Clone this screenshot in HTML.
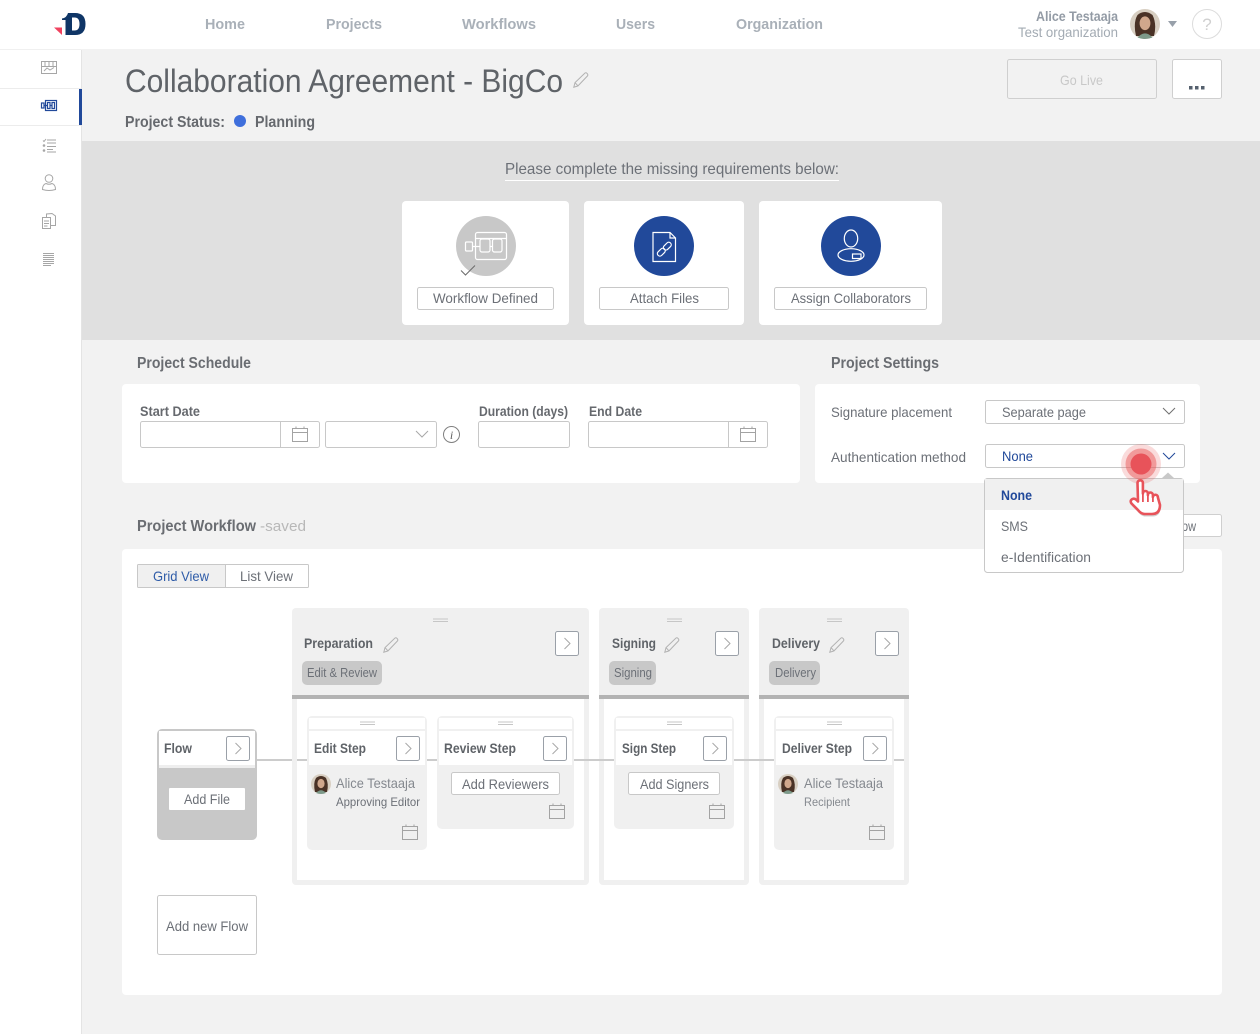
<!DOCTYPE html>
<html lang="en">
<head>
<meta charset="utf-8">
<title>Collaboration Agreement - BigCo</title>
<style>
html,body{margin:0;padding:0;background:#f2f2f2;}
body{width:1260px;height:1034px;overflow:hidden;}
svg{display:block;}
text{font-family:"Liberation Sans",sans-serif;font-size:14px;fill:#6c7077;}
.b{font-weight:bold;}
.nav{font-size:15px;font-weight:bold;fill:#a9b0b8;}
.st{font-size:14px;font-weight:bold;fill:#5f6368;}
.h{font-size:16px;font-weight:bold;fill:#6a6d72;}
.lab{font-size:14px;font-weight:bold;fill:#66696e;}
.ln{fill:none;stroke:#a6a6a6;stroke-width:1;}
.box{fill:#fff;stroke:#c8c8c8;stroke-width:1;}
.wh{fill:none;stroke:#fff;stroke-width:1.2;}
</style>
</head>
<body>
<svg width="1260" height="1034" viewBox="0 0 1260 1034" xmlns="http://www.w3.org/2000/svg">
<defs>
  <g id="cal"><rect x="0.5" y="2.5" width="15" height="13" fill="none" stroke="#a3a3a3"/><path d="M0.5 6.5H15.5M4 0.5V2.5M12 0.5V2.5" fill="none" stroke="#a3a3a3"/></g>
  <g id="nx"><rect x="0.5" y="0.5" width="23" height="24" rx="2" fill="#fff" stroke="#9aa0a8"/><path d="M9.5 7L15 12.5L9.5 18" fill="none" stroke="#a8a8a8"/></g>
  <g id="pen"><path d="M0.8 15.2L2 10.6L12 1Q13 .4 13.9 1.3L14.6 2.1Q15.2 3.1 14.4 4L5 13.9Z M2 10.600L5 13.900" fill="none" stroke="#b2b2b2"/></g>
  <g id="drag"><path d="M0 0H15M0 2.5H15" stroke="#c6c6c6" fill="none"/></g>
  <g id="av"><circle r="10" fill="#d8cfc2"/><path d="M-6 8Q-8-1-5-6Q0-10 5-6Q8 0 6 8Z" fill="#4a3226"/><ellipse cx="0" cy="-0.5" rx="3.6" ry="4.6" fill="#d0a78c"/><path d="M-5 9Q0 3.500 5 9Q0 11-5 9Z" fill="#7d9a8a"/></g>
</defs>

<!-- backgrounds -->
<rect width="1260" height="1034" fill="#f2f2f2"/>
<rect width="1260" height="49" fill="#fff"/>
<rect x="82" y="141" width="1178" height="199" fill="#e0e0e0"/>
<rect x="0" y="50" width="81" height="984" fill="#fff"/>
<rect x="81" y="50" width="1" height="984" fill="#e4e4e4"/>
<rect x="0" y="49" width="81" height="1" fill="#f0f0f0"/>
<rect x="0" y="88" width="81" height="1" fill="#ececec"/>
<rect x="0" y="125" width="81" height="1" fill="#ececec"/>
<rect x="79" y="89" width="3" height="36" fill="#21499a"/>

<!-- logo -->
<path d="M54 27.5H62V35Z" fill="#f0425f"/>
<path d="M62 18.500Q66.500 18 68 13H72V35H65.500V20H62Z" fill="#0f3566"/>
<path d="M72 13H75Q85.500 13 85.500 24Q85.500 35 75 35H65.500V30.500H74.500Q79.500 30.500 79.500 24Q79.500 17.500 74.500 17.500H72Z" fill="#0f3566"/>

<!-- nav -->
<text class="nav" x="205" y="29" textLength="40" lengthAdjust="spacingAndGlyphs">Home</text>
<text class="nav" x="326" y="29" textLength="56" lengthAdjust="spacingAndGlyphs">Projects</text>
<text class="nav" x="462" y="29" textLength="74" lengthAdjust="spacingAndGlyphs">Workflows</text>
<text class="nav" x="616" y="29" textLength="39" lengthAdjust="spacingAndGlyphs">Users</text>
<text class="nav" x="736" y="29" textLength="87" lengthAdjust="spacingAndGlyphs">Organization</text>
<text x="1036" y="21" textLength="82" lengthAdjust="spacingAndGlyphs" style="font-size:13.500px;font-weight:bold;fill:#939ba5">Alice Testaaja</text>
<text x="1018" y="37" textLength="100" lengthAdjust="spacingAndGlyphs" style="font-size:14px;fill:#a3abb3">Test organization</text>
<g transform="translate(1145,24) scale(1.500)"><use href="#av"/></g>
<path d="M1168 21H1177L1172.500 27Z" fill="#98a0aa"/>
<circle cx="1207" cy="24" r="14.500" fill="#fff" stroke="#dcdcdc"/>
<text x="1207" y="30" text-anchor="middle" style="font-size:17px;fill:#d0d0d0">?</text>

<!-- sidebar icons -->
<g class="ln" fill="none">
  <rect x="41.500" y="61.500" width="15" height="12"/>
  <path d="M41.500 66.500H56.500M45 61.500V66.500M49 61.500V66.500M53 61.500V66.500M44 71L47 68L50 70L54 67.500"/>
  <path d="M47 140H56M47 143H56M47 146.500H56M47 149.500H53M47 152H56M43 140.500L44 141.500L46 139"/>
  <circle cx="49" cy="178.500" r="3.800"/>
  <path d="M42.500 189.500Q42.500 184.500 46 183.500Q49 185 52 183.500Q55.500 184.500 55.500 189.500Q49 191.500 42.500 189.500Z"/>
  <path d="M42.500 217.500H50.500V228.500H42.500ZM46.500 217V214L52 213.500L55.500 216V225.500H50.500M44 221H49M44 223.500H49M44 226H47.500"/>
  <path d="M43 253.500H54M43 255.500H54M43 257.500H54M43 259.500H54M43 261.500H54M43 263.500H54M43 265.500H51" stroke-width="1"/>
</g>
<circle cx="44" cy="145.500" r="1.300" fill="#a6a6a6"/><circle cx="44" cy="150.500" r="1.300" fill="#a6a6a6"/>
<g fill="none" stroke="#21499a" stroke-width="1.200">
  <rect x="45.500" y="100.500" width="11" height="10"/>
  <rect x="41.500" y="103" width="2.500" height="5"/>
  <rect x="47.500" y="102.500" width="2.500" height="6"/>
  <rect x="52" y="102.500" width="2.500" height="6"/>
  <path d="M44 105.500H47.500M50 105.500H52"/>
</g>

<!-- title -->
<text x="125" y="92" textLength="438" lengthAdjust="spacingAndGlyphs" style="font-size:32px;fill:#5f6368">Collaboration Agreement - BigCo</text>
<use href="#pen" x="573" y="72"/>
<text x="125" y="127" textLength="100" lengthAdjust="spacingAndGlyphs" style="font-size:16px;font-weight:bold;fill:#66696e">Project Status:</text>
<circle cx="240" cy="121" r="6" fill="#3f6fdc"/>
<text x="255" y="127" textLength="60" lengthAdjust="spacingAndGlyphs" style="font-size:16px;font-weight:bold;fill:#66696e">Planning</text>

<rect x="1007.500" y="59.500" width="149" height="39" rx="2" fill="#f2f2f2" stroke="#cfcfcf"/>
<text x="1060" y="85" textLength="43" lengthAdjust="spacingAndGlyphs" style="font-size:14px;fill:#c8c8c8">Go Live</text>
<rect x="1172.500" y="59.500" width="49" height="39" rx="2" fill="#fff" stroke="#cfcfcf"/>
<path d="M1189 86h3.500v3.500h-3.500zM1195 86h3.500v3.500h-3.500zM1201 86h3.500v3.500h-3.500z" fill="#55606e"/>

<!-- requirements -->
<text x="505" y="174" textLength="334" lengthAdjust="spacingAndGlyphs" style="font-size:16px;fill:#6c7077">Please complete the missing requirements below:</text>
<rect x="505" y="180" width="334" height="1" fill="#fff"/>

<rect x="402" y="201" width="167" height="124" rx="4" fill="#fff"/>
<rect x="584" y="201" width="160" height="124" rx="4" fill="#fff"/>
<rect x="759" y="201" width="183" height="124" rx="4" fill="#fff"/>
<circle cx="486" cy="246" r="30" fill="#c8c8c8"/>
<circle cx="664" cy="246" r="30" fill="#21499a"/>
<circle cx="851" cy="246" r="30" fill="#21499a"/>
<g class="wh" style="fill:none;stroke:#fff;stroke-width:1.200">
  <rect x="475.500" y="232.500" width="31" height="27" rx="2"/>
  <path d="M475.500 238.500H506.500M472.500 246.500H480M490 246.500H492.500"/>
  <rect x="465.500" y="242" width="7" height="9" rx="1"/>
  <rect x="480" y="239" width="10" height="13" rx="2"/>
  <rect x="492.500" y="239" width="9.500" height="13" rx="2"/>
  <path d="M653 232.500H670L675.500 238V261.500H653ZM670 232.500V238H675.500"/>
  <g transform="rotate(-45 664.500 249)">
    <rect x="655.500" y="246.500" width="9" height="5" rx="2.500"/>
    <rect x="664" y="246.500" width="9" height="5" rx="2.500"/>
  </g>
  <ellipse cx="851" cy="238.500" rx="6.700" ry="8.500"/>
  <ellipse cx="851" cy="255" rx="13" ry="6.300"/>
  <rect x="852.500" y="254" width="8.500" height="4.500" fill="#21499a"/>
</g>
<path d="M461 270.500L465.500 275L475 265.500" fill="none" stroke="#6a6a6a"/>
<rect x="417.500" y="287.500" width="136" height="22" rx="2" class="box"/>
<rect x="599.500" y="287.500" width="129" height="22" rx="2" class="box"/>
<rect x="774.500" y="287.500" width="152" height="22" rx="2" class="box"/>
<text x="433" y="303" textLength="105" lengthAdjust="spacingAndGlyphs">Workflow Defined</text>
<text x="630" y="303" textLength="69" lengthAdjust="spacingAndGlyphs">Attach Files</text>
<text x="791" y="303" textLength="120" lengthAdjust="spacingAndGlyphs">Assign Collaborators</text>

<!-- schedule -->
<text class="h" x="137" y="368" textLength="114" lengthAdjust="spacingAndGlyphs">Project Schedule</text>
<text class="h" x="831" y="368" textLength="108" lengthAdjust="spacingAndGlyphs">Project Settings</text>
<rect x="122" y="384" width="678" height="99" rx="4" fill="#fff"/>
<rect x="815" y="384" width="385" height="99" rx="4" fill="#fff"/>
<text class="lab" x="140" y="416" textLength="60" lengthAdjust="spacingAndGlyphs">Start Date</text>
<text class="lab" x="479" y="416" textLength="89" lengthAdjust="spacingAndGlyphs">Duration (days)</text>
<text class="lab" x="589" y="416" textLength="53" lengthAdjust="spacingAndGlyphs">End Date</text>
<rect x="140.500" y="421.500" width="179" height="26" rx="2" class="box"/>
<path d="M280.500 421.500V447.500" stroke="#c8c8c8"/>
<use href="#cal" x="292" y="426"/>
<rect x="325.500" y="421.500" width="111" height="26" rx="2" class="box"/>
<path d="M416 431L422 437L428 431" fill="none" stroke="#a8a8a8"/>
<circle cx="451.500" cy="434.500" r="8" fill="#fff" stroke="#808080"/>
<text x="451.500" y="439" text-anchor="middle" style="font-size:12px;font-style:italic;font-family:'Liberation Serif',serif;fill:#606060">i</text>
<rect x="478.500" y="421.500" width="91" height="26" rx="2" class="box"/>
<rect x="588.500" y="421.500" width="179" height="26" rx="2" class="box"/>
<path d="M728.500 421.500V447.500" stroke="#c8c8c8"/>
<use href="#cal" x="740" y="426"/>

<!-- settings -->
<text x="831" y="417" textLength="121" lengthAdjust="spacingAndGlyphs">Signature placement</text>
<text x="831" y="462" textLength="135" lengthAdjust="spacingAndGlyphs">Authentication method</text>
<rect x="985.500" y="400.500" width="199" height="23" rx="2" class="box"/>
<text x="1002" y="417" textLength="84" lengthAdjust="spacingAndGlyphs">Separate page</text>
<path d="M1163 408L1169 414L1175 408" fill="none" stroke="#707070"/>
<rect x="985.500" y="444.500" width="199" height="23" rx="2" class="box"/>
<text x="1002" y="461" textLength="31" lengthAdjust="spacingAndGlyphs" style="fill:#21499a">None</text>
<path d="M1163 453L1169 459L1175 453" fill="none" stroke="#21499a"/>

<!-- workflow -->
<text class="h" x="137" y="531" textLength="119" lengthAdjust="spacingAndGlyphs">Project Workflow</text>
<text x="260" y="531" textLength="46" lengthAdjust="spacingAndGlyphs" style="font-size:15px;fill:#b8b8b8">-saved</text>
<rect x="1150.500" y="514.500" width="71" height="22" rx="2" fill="#fff" stroke="#cfcfcf"/>
<text x="1182" y="531" textLength="14" lengthAdjust="spacingAndGlyphs">ow</text>
<rect x="122" y="549" width="1100" height="446" rx="4" fill="#fff"/>

<rect x="137.500" y="564.500" width="171" height="23" rx="1" fill="#fff" stroke="#c8c8c8"/>
<rect x="138" y="565" width="87" height="22" fill="#f0f0f0"/>
<path d="M225.500 564.500V587.500" stroke="#c8c8c8"/>
<text x="153" y="581" textLength="56" lengthAdjust="spacingAndGlyphs" style="fill:#2f5ca8">Grid View</text>
<text x="240" y="581" textLength="53" lengthAdjust="spacingAndGlyphs">List View</text>

<!-- connector -->
<rect x="257" y="759" width="647" height="2" fill="#cccccc"/>

<!-- stages -->
<g fill="#f0f0f0">
  <path d="M292 612a4 4 0 0 1 4-4H585a4 4 0 0 1 4 4V881a4 4 0 0 1-4 4H296a4 4 0 0 1-4-4Z"/>
  <path d="M599 612a4 4 0 0 1 4-4H745a4 4 0 0 1 4 4V881a4 4 0 0 1-4 4H603a4 4 0 0 1-4-4Z"/>
  <path d="M759 612a4 4 0 0 1 4-4H905a4 4 0 0 1 4 4V881a4 4 0 0 1-4 4H763a4 4 0 0 1-4-4Z"/>
</g>
<rect x="297" y="699" width="287" height="181" fill="#fff"/>
<rect x="604" y="699" width="140" height="181" fill="#fff"/>
<rect x="764" y="699" width="140" height="181" fill="#fff"/>
<rect x="292" y="695" width="297" height="4" fill="#b3b3b3"/>
<rect x="599" y="695" width="150" height="4" fill="#b3b3b3"/>
<rect x="759" y="695" width="150" height="4" fill="#b3b3b3"/>
<rect x="297" y="759" width="287" height="2" fill="#cccccc"/>
<rect x="604" y="759" width="140" height="2" fill="#cccccc"/>
<rect x="764" y="759" width="140" height="2" fill="#cccccc"/>
<rect x="584" y="759" width="20" height="2" fill="#cccccc"/>
<rect x="744" y="759" width="20" height="2" fill="#cccccc"/>

<use href="#drag" x="433" y="619"/><use href="#drag" x="667" y="619"/><use href="#drag" x="827" y="619"/>
<text class="st" x="304" y="648" textLength="69" lengthAdjust="spacingAndGlyphs">Preparation</text>
<text class="st" x="612" y="648" textLength="44" lengthAdjust="spacingAndGlyphs">Signing</text>
<text class="st" x="772" y="648" textLength="48" lengthAdjust="spacingAndGlyphs">Delivery</text>
<use href="#pen" x="383" y="637"/><use href="#pen" x="664" y="637"/><use href="#pen" x="829" y="637"/>
<use href="#nx" x="555" y="631"/><use href="#nx" x="715" y="631"/><use href="#nx" x="875" y="631"/>
<rect x="302" y="661" width="80" height="24" rx="5" fill="#c8c8c8"/>
<rect x="609" y="661" width="47" height="24" rx="5" fill="#c8c8c8"/>
<rect x="769" y="661" width="51" height="24" rx="5" fill="#c8c8c8"/>
<text x="307" y="677" textLength="70" lengthAdjust="spacingAndGlyphs" style="font-size:12.500px">Edit &amp; Review</text>
<text x="614" y="677" textLength="38" lengthAdjust="spacingAndGlyphs" style="font-size:12.500px">Signing</text>
<text x="775" y="677" textLength="41" lengthAdjust="spacingAndGlyphs" style="font-size:12.500px">Delivery</text>

<!-- flow card -->
<rect x="157" y="729" width="100" height="111" rx="5" fill="#c8c8c8"/>
<rect x="159" y="731" width="96" height="34" fill="#fff"/>
<rect x="159" y="765" width="96" height="3" fill="#eeeeee"/>
<text class="st" x="164" y="753" textLength="28" lengthAdjust="spacingAndGlyphs">Flow</text>
<use href="#nx" x="226" y="736"/>
<rect x="169" y="788" width="76" height="22" rx="1" fill="#fff"/>
<text x="184" y="804" textLength="46" lengthAdjust="spacingAndGlyphs">Add File</text>

<!-- step cards -->
<rect x="307" y="716" width="120" height="134" rx="5" fill="#f0f0f0"/>
<rect x="437" y="716" width="137" height="113" rx="5" fill="#f0f0f0"/>
<rect x="614" y="716" width="120" height="113" rx="5" fill="#f0f0f0"/>
<rect x="774" y="716" width="120" height="134" rx="5" fill="#f0f0f0"/>
<g fill="#fff">
  <rect x="309" y="718" width="116" height="11"/><rect x="309" y="731" width="116" height="34"/>
  <rect x="439" y="718" width="133" height="11"/><rect x="439" y="731" width="133" height="34"/>
  <rect x="616" y="718" width="116" height="11"/><rect x="616" y="731" width="116" height="34"/>
  <rect x="776" y="718" width="116" height="11"/><rect x="776" y="731" width="116" height="34"/>
</g>
<use href="#drag" x="360" y="722"/><use href="#drag" x="498" y="722"/><use href="#drag" x="667" y="722"/><use href="#drag" x="827" y="722"/>
<text class="st" x="314" y="753" textLength="52" lengthAdjust="spacingAndGlyphs">Edit Step</text>
<text class="st" x="444" y="753" textLength="72" lengthAdjust="spacingAndGlyphs">Review Step</text>
<text class="st" x="622" y="753" textLength="54" lengthAdjust="spacingAndGlyphs">Sign Step</text>
<text class="st" x="782" y="753" textLength="70" lengthAdjust="spacingAndGlyphs">Deliver Step</text>
<use href="#nx" x="396" y="736"/><use href="#nx" x="543" y="736"/><use href="#nx" x="703" y="736"/><use href="#nx" x="863" y="736"/>

<use href="#av" x="321" y="784"/>
<text x="336" y="788" textLength="79" lengthAdjust="spacingAndGlyphs" style="fill:#85898f">Alice Testaaja</text>
<text x="336" y="806" textLength="84" lengthAdjust="spacingAndGlyphs" style="font-size:12px">Approving Editor</text>
<use href="#cal" x="402" y="824"/>

<use href="#av" x="788" y="784"/>
<text x="804" y="788" textLength="79" lengthAdjust="spacingAndGlyphs" style="fill:#85898f">Alice Testaaja</text>
<text x="804" y="806" textLength="46" lengthAdjust="spacingAndGlyphs" style="font-size:12px;fill:#85898f">Recipient</text>
<use href="#cal" x="869" y="824"/>

<rect x="451.500" y="772.500" width="108" height="22" rx="2" class="box"/>
<text x="462" y="789" textLength="87" lengthAdjust="spacingAndGlyphs">Add Reviewers</text>
<use href="#cal" x="549" y="803"/>
<rect x="628.500" y="772.500" width="91" height="22" rx="2" class="box"/>
<text x="640" y="789" textLength="69" lengthAdjust="spacingAndGlyphs">Add Signers</text>
<use href="#cal" x="709" y="803"/>

<rect x="157.500" y="895.500" width="99" height="59" rx="2" fill="#fff" stroke="#c8c8c8"/>
<text x="166" y="931" textLength="82" lengthAdjust="spacingAndGlyphs">Add new Flow</text>

<!-- dropdown -->
<path d="M1162 478L1168 472.500L1174 478Z" fill="#c8c8c8"/>
<rect x="984.500" y="478.500" width="199" height="94" rx="3" fill="#fff" stroke="#c8c8c8"/>
<rect x="985" y="479" width="198" height="31" fill="#f0f0f0"/>
<text x="1001" y="500" textLength="31" lengthAdjust="spacingAndGlyphs" style="font-weight:bold;fill:#21499a">None</text>
<text x="1001" y="531" textLength="27" lengthAdjust="spacingAndGlyphs">SMS</text>
<text x="1001" y="562" textLength="90" lengthAdjust="spacingAndGlyphs">e-Identification</text>

<!-- pointer -->
<circle cx="1141" cy="464" r="20" fill="#e85a5a" fill-opacity=".22"/>
<circle cx="1141" cy="464" r="15.500" fill="#e85a5a" fill-opacity=".5"/>
<circle cx="1141" cy="464" r="10.500" fill="#e8535a"/>
<path d="M1137.500 483a2.700 2.700 0 0 1 5.400 0V493.500a2.500 2.500 0 0 1 5 0V495a2.500 2.500 0 0 1 5 0V497a2.500 2.500 0 0 1 5 0.500L1160 505q0 9-8 9h-7q-4 0-7-4l-6.500-6.500q-2-3 1-4.500q2-1 4 1l1.500 1.500Z" fill="#c4c4c4" transform="translate(0.5,2.5)" opacity=".8"/>
<path d="M1137.500 483a2.700 2.700 0 0 1 5.400 0V493.500a2.500 2.500 0 0 1 5 0V495a2.500 2.500 0 0 1 5 0V497a2.500 2.500 0 0 1 5 0.500L1160 505q0 9-8 9h-7q-4 0-7-4l-6.500-6.500q-2-3 1-4.500q2-1 4 1l1.500 1.500Z" fill="#fff" stroke="#e8535a" stroke-width="2.600" stroke-linejoin="round"/>
<path d="M1142.900 493V502M1147.900 494V502M1152.900 496V502" stroke="#e8535a" stroke-width="1.800" fill="none"/>
</svg>
</body>
</html>
